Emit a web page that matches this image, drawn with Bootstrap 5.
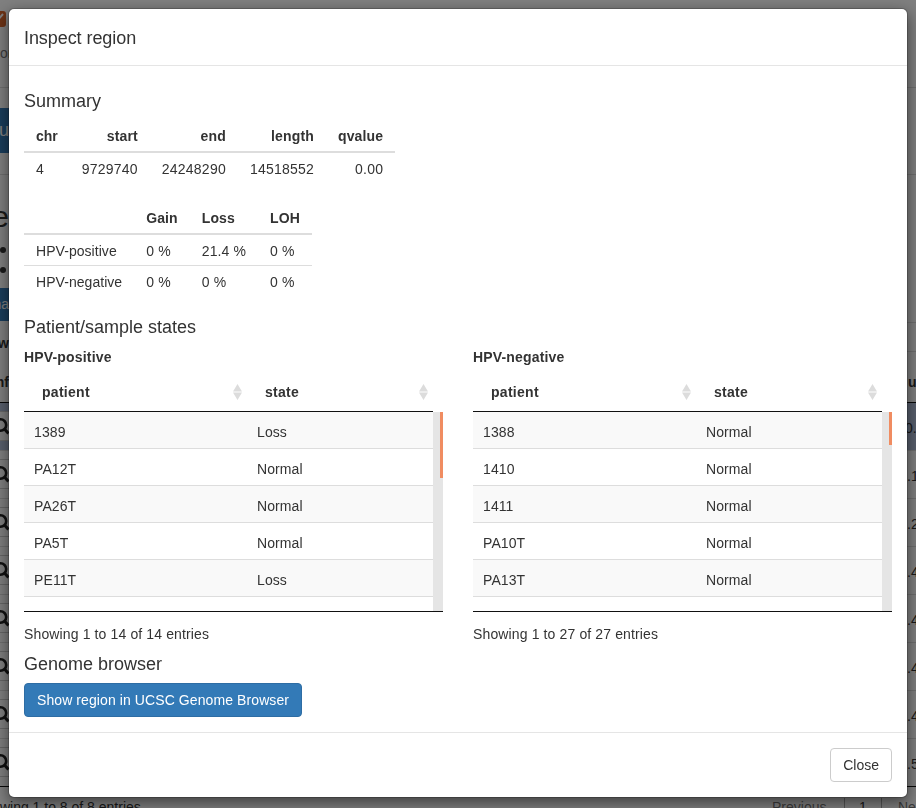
<!DOCTYPE html>
<html lang="en">

<head>
  <meta charset="UTF-8">
  <meta name="viewport" content="width=device-width, initial-scale=1.0">
  <title>Inspect region</title>
  <link rel="stylesheet" href="https://cdn.jsdelivr.net/npm/bootstrap@5.3.0/dist/css/bootstrap.min.css">
  <style>
    html, body {
      height: 100%;
      overflow: hidden;
    }

    body {
      font-family: "Liberation Sans", Arial, sans-serif;
      font-size: 14px;
      line-height: 1.42857;
      color: #333;
      background: #fff;
    }

    /* page behind the modal, only its edges show */
    .bg-page {
      height: 808px;
      overflow: hidden;
    }

    .edge-left {
      width: 9px;
      overflow: hidden;
      display: flex;
      justify-content: flex-end;
      white-space: nowrap;
      flex: none;
    }

    .edge-left svg {
      flex: none;
    }

    .edge-right {
      width: 9px;
      overflow: hidden;
      white-space: nowrap;
      flex: none;
    }

    .bg-top {
      height: 88px;
      padding-top: 11px;
      border-bottom: 1px solid #ddd;
    }

    .bg-check {
      margin-right: 3px;
    }

    .bg-sub {
      margin-top: 17px;
      color: #777;
      justify-content: flex-start;
    }

    .bg-run {
      height: 87px;
      padding-top: 20px;
      border-bottom: 1px solid #ddd;
    }

    .bg-btn {
      background: #337ab7;
      color: #fff;
    }

    .bg-run .bg-btn {
      height: 45px;
      font-size: 18px;
      line-height: 45px;
    }

    .bg-heading {
      height: 33px;
      margin-top: 25px;
      font-size: 30px;
      line-height: 33px;
    }

    .bg-bullets {
      margin-top: 7px;
      height: 40px;
    }

    .bg-dot-row {
      height: 20px;
      align-items: center;
      padding-right: 3px;
    }

    .bg-dot {
      width: 6px;
      height: 6px;
      border-radius: 50%;
      background: #333;
      flex: none;
    }

    .bg-manage {
      margin-top: 8px;
      height: 33px;
      line-height: 33px;
    }

    .bg-rule {
      height: 1px;
      margin-top: 1px;
      margin-left: 500px;
      background: #ddd;
    }

    .bg-rule-second {
      margin-top: 28px;
    }

    .bg-word {
      margin-top: -18px;
      height: 20px;
      font-weight: 700;
    }

    .bg-head {
      margin-top: 19px;
      height: 30px;
      border-bottom: 1px solid #111;
      font-weight: 700;
    }

    .bg-head-right {
      padding-left: 1px;
    }

    .bg-row {
      height: 48px;
      border-bottom: 1px solid #ddd;
    }

    .bg-row.is-selected {
      background: #b0bed9;
    }

    .bg-row.is-last {
      border-bottom-color: #111;
    }

    .bg-search {
      height: 30px;
      margin-top: 8px;
      background: #fff;
      border-top: 1px solid #ccc;
      border-bottom: 1px solid #ccc;
      align-items: center;
    }

    .bg-num {
      line-height: 48px;
      padding-top: 1px;
    }

    .bg-num-first {
      margin-left: -2px;
    }

    .bg-foot {
      height: 21px;
      margin-top: 11px;
    }

    .bg-foot-left {
      margin-left: -25px;
    }

    .bg-pager {
      width: 144px;
      overflow: hidden;
      color: #777;
    }

    .bg-pager-prev {
      width: 72px;
      flex: none;
    }

    .bg-pager-num {
      width: 37px;
      flex: none;
      text-align: center;
      border-left: 1px solid #aaa;
      color: #333;
    }

    .bg-pager-next {
      padding-left: 16px;
      border-left: 1px solid #aaa;
      flex: none;
    }

    /* modal */
    .region-modal {
      --bs-modal-width: 900px;
      --bs-modal-margin: 8px;
      --bs-modal-padding: 15px;
      --bs-modal-header-padding: 17px 15px 13px;
      --bs-modal-footer-gap: 0px;
      --bs-modal-border-radius: 6px;
      --bs-modal-inner-border-radius: 5px;
      --bs-modal-border-color: rgba(0, 0, 0, .2);
      --bs-modal-header-border-color: #e5e5e5;
      --bs-modal-footer-border-color: #e5e5e5;
      --bs-modal-title-line-height: 1.42857;
      overflow: hidden;
    }

    .region-modal .modal-content {
      box-shadow: 0 5px 15px rgba(0, 0, 0, .5);
    }

    .region-title {
      font-size: 18px;
      font-weight: 400;
      letter-spacing: -.07px;
    }

    .section-title {
      font-size: 18px;
      font-weight: 400;
      line-height: 1.1;
      margin: 11px 0 9px;
    }

    .genome-title {
      margin-bottom: 8px;
    }

    .info-table {
      width: auto;
      margin-bottom: 20px;
      color: #333;
      --bs-table-color: #333;
      --bs-table-border-color: #ddd;
    }

    .info-table > :not(caption) > * > * {
      padding: 5px 12px;
      line-height: 20px;
    }

    .info-table > tbody > * > * {
      padding: 6px 12px 4px;
    }

    .info-table thead th {
      border-bottom: 2px solid #ddd;
      letter-spacing: .15px;
    }

    .info-table thead th:first-child {
      letter-spacing: 0;
    }

    .info-table td {
      letter-spacing: .12px;
    }

    .info-table td.text-end {
      letter-spacing: .22px;
    }

    .info-table td.row-label {
      letter-spacing: .05px;
    }

    .info-table tbody tr:last-child td {
      border-bottom: 0;
    }

    .info-table-last {
      margin-bottom: 22px;
    }

    .info-table-last thead th {
      letter-spacing: .1px;
    }

    .state-row {
      --bs-gutter-x: 30px;
    }

    .state-name {
      font-size: 14px;
      font-weight: 700;
      line-height: 20px;
      margin: 1px 0 4px;
      letter-spacing: .17px;
    }

    .dt-table {
      table-layout: fixed;
      width: 409px;
      margin: 0;
      --bs-table-color: #333;
      --bs-table-border-color: #ddd;
      --bs-table-striped-bg: #f9f9f9;
      --bs-table-striped-color: #333;
    }

    .dt-col-patient {
      width: 223px;
    }

    .dt-head > :not(caption) > * > * {
      padding: 11px 5px 9px 18px;
      line-height: 20px;
      border-bottom: 1px solid #111;
      letter-spacing: .28px;
    }

    .dt-rows .dt-table > :not(caption) > * > * {
      padding: 10px 10px 6px;
      line-height: 20px;
      letter-spacing: .1px;
    }

    .dt-scroll {
      height: 200px;
      border-bottom: 1px solid #111;
      width: 419px;
    }

    .dt-rows {
      width: 409px;
      overflow: hidden;
    }

    .dt-track {
      width: 10px;
      background: #e5e5e5;
      flex: none;
    }

    .dt-thumb {
      width: 3px;
      margin-left: auto;
      background: #f08c61;
    }

    .dt-info {
      padding-top: 12px;
      line-height: 20px;
      letter-spacing: .13px;
    }

    .ucsc-btn {
      --bs-btn-padding-x: 12px;
      --bs-btn-padding-y: 6px;
      --bs-btn-font-size: 14px;
      --bs-btn-line-height: 20px;
      --bs-btn-border-radius: 4px;
      --bs-btn-bg: #337ab7;
      --bs-btn-border-color: #2e6da4;
      --bs-btn-color: #fff;
      display: block;
      white-space: nowrap;
      letter-spacing: .09px;
    }

    .close-btn {
      --bs-btn-padding-x: 12px;
      --bs-btn-padding-y: 6px;
      --bs-btn-font-size: 14px;
      --bs-btn-line-height: 20px;
      --bs-btn-border-radius: 4px;
      --bs-btn-bg: #fff;
      --bs-btn-border-color: #ccc;
      --bs-btn-color: #333;
    }
  </style>
</head>

<body>
  <div class="bg-page">
    <div class="bg-top">
      <div class="edge-left">
        <svg class="bg-check" width="16" height="16" viewBox="0 0 16 16" aria-hidden="true">
          <rect width="16" height="16" rx="3" fill="#d9662c"></rect>
          <path d="M3 8l3 3 7-8" fill="none" stroke="#fff" stroke-width="2"></path>
        </svg>
      </div>
      <div class="edge-left bg-sub">or</div>
    </div>
    <div class="bg-run">
      <div class="edge-left bg-btn">Ru</div>
    </div>
    <div class="edge-left bg-heading">e</div>
    <div class="bg-bullets">
      <div class="edge-left bg-dot-row"><span class="bg-dot"></span></div>
      <div class="edge-left bg-dot-row"><span class="bg-dot"></span></div>
    </div>
    <div class="edge-left bg-btn bg-manage">na</div>
    <div class="bg-rule"></div>
    <div class="bg-rule bg-rule-second"></div>
    <div class="edge-left bg-word">w</div>

    <div class="bg-head d-flex justify-content-between align-items-start">
      <div class="edge-left">nf</div>
      <div class="edge-right bg-head-right">u</div>
    </div>

    <div class="bg-row is-selected d-flex justify-content-between">
      <div class="edge-left bg-search">
        <svg width="17" height="17" viewBox="0 0 17 17" aria-hidden="true">
          <circle cx="8.5" cy="7" r="5.7" fill="none" stroke="#222" stroke-width="2.6"></circle>
          <path d="M12.7 11.2L16.5 15.5" stroke="#222" stroke-width="3"></path>
        </svg>
      </div>
      <div class="edge-right bg-num"><span class="bg-num-first d-inline-block">0.</span></div>
    </div>
    <div class="bg-row d-flex justify-content-between">
      <div class="edge-left bg-search">
        <svg width="17" height="17" viewBox="0 0 17 17" aria-hidden="true">
          <circle cx="8.5" cy="7" r="5.7" fill="none" stroke="#222" stroke-width="2.6"></circle>
          <path d="M12.7 11.2L16.5 15.5" stroke="#222" stroke-width="3"></path>
        </svg>
      </div>
      <div class="edge-right bg-num">.1</div>
    </div>
    <div class="bg-row d-flex justify-content-between">
      <div class="edge-left bg-search">
        <svg width="17" height="17" viewBox="0 0 17 17" aria-hidden="true">
          <circle cx="8.5" cy="7" r="5.7" fill="none" stroke="#222" stroke-width="2.6"></circle>
          <path d="M12.7 11.2L16.5 15.5" stroke="#222" stroke-width="3"></path>
        </svg>
      </div>
      <div class="edge-right bg-num">.2</div>
    </div>
    <div class="bg-row d-flex justify-content-between">
      <div class="edge-left bg-search">
        <svg width="17" height="17" viewBox="0 0 17 17" aria-hidden="true">
          <circle cx="8.5" cy="7" r="5.7" fill="none" stroke="#222" stroke-width="2.6"></circle>
          <path d="M12.7 11.2L16.5 15.5" stroke="#222" stroke-width="3"></path>
        </svg>
      </div>
      <div class="edge-right bg-num">.4</div>
    </div>
    <div class="bg-row d-flex justify-content-between">
      <div class="edge-left bg-search">
        <svg width="17" height="17" viewBox="0 0 17 17" aria-hidden="true">
          <circle cx="8.5" cy="7" r="5.7" fill="none" stroke="#222" stroke-width="2.6"></circle>
          <path d="M12.7 11.2L16.5 15.5" stroke="#222" stroke-width="3"></path>
        </svg>
      </div>
      <div class="edge-right bg-num">.4</div>
    </div>
    <div class="bg-row d-flex justify-content-between">
      <div class="edge-left bg-search">
        <svg width="17" height="17" viewBox="0 0 17 17" aria-hidden="true">
          <circle cx="8.5" cy="7" r="5.7" fill="none" stroke="#222" stroke-width="2.6"></circle>
          <path d="M12.7 11.2L16.5 15.5" stroke="#222" stroke-width="3"></path>
        </svg>
      </div>
      <div class="edge-right bg-num">.4</div>
    </div>
    <div class="bg-row d-flex justify-content-between">
      <div class="edge-left bg-search">
        <svg width="17" height="17" viewBox="0 0 17 17" aria-hidden="true">
          <circle cx="8.5" cy="7" r="5.7" fill="none" stroke="#222" stroke-width="2.6"></circle>
          <path d="M12.7 11.2L16.5 15.5" stroke="#222" stroke-width="3"></path>
        </svg>
      </div>
      <div class="edge-right bg-num">.4</div>
    </div>
    <div class="bg-row is-last d-flex justify-content-between">
      <div class="edge-left bg-search">
        <svg width="17" height="17" viewBox="0 0 17 17" aria-hidden="true">
          <circle cx="8.5" cy="7" r="5.7" fill="none" stroke="#222" stroke-width="2.6"></circle>
          <path d="M12.7 11.2L16.5 15.5" stroke="#222" stroke-width="3"></path>
        </svg>
      </div>
      <div class="edge-right bg-num">.5</div>
    </div>

    <div class="bg-foot d-flex justify-content-between">
      <div class="bg-foot-left">Showing 1 to 8 of 8 entries</div>
      <div class="bg-pager d-flex">
        <span class="bg-pager-prev">Previous</span>
        <span class="bg-pager-num">1</span>
        <span class="bg-pager-next">Next</span>
      </div>
    </div>
  </div>

  <div class="modal-backdrop show"></div>

  <div class="modal region-modal d-block" tabindex="-1">
    <div class="modal-dialog">
      <div class="modal-content">
        <div class="modal-header">
          <h4 class="modal-title region-title">Inspect region</h4>
        </div>
        <div class="modal-body">
          <h4 class="section-title">Summary</h4>
          <table class="table info-table">
            <thead>
              <tr>
                <th>chr</th>
                <th class="text-end">start</th>
                <th class="text-end">end</th>
                <th class="text-end">length</th>
                <th class="text-end">qvalue</th>
              </tr>
            </thead>
            <tbody>
              <tr>
                <td>4</td>
                <td class="text-end">9729740</td>
                <td class="text-end">24248290</td>
                <td class="text-end">14518552</td>
                <td class="text-end">0.00</td>
              </tr>
            </tbody>
          </table>

          <table class="table info-table info-table-last">
            <thead>
              <tr>
                <th></th>
                <th>Gain</th>
                <th>Loss</th>
                <th>LOH</th>
              </tr>
            </thead>
            <tbody>
              <tr>
                <td class="row-label">HPV-positive</td>
                <td>0 %</td>
                <td>21.4 %</td>
                <td>0 %</td>
              </tr>
              <tr>
                <td class="row-label">HPV-negative</td>
                <td>0 %</td>
                <td>0 %</td>
                <td>0 %</td>
              </tr>
            </tbody>
          </table>

          <h4 class="section-title">Patient/sample states</h4>
          <div class="row state-row">
            <div class="col-6">
              <h5 class="state-name">HPV-positive</h5>
              <table class="table dt-table dt-head">
                <colgroup><col class="dt-col-patient"><col></colgroup>
                <thead>
                  <tr>
                    <th>
                      <div class="d-flex justify-content-between align-items-center">
                        <span>patient</span>
                        <svg width="9" height="16" viewBox="0 0 9 16" aria-hidden="true"><path d="M4.5 0L9 7.5H0zM4.5 16L0 8.5h9z" fill="#dcdcdc"></path></svg>
                      </div>
                    </th>
                    <th>
                      <div class="d-flex justify-content-between align-items-center">
                        <span>state</span>
                        <svg width="9" height="16" viewBox="0 0 9 16" aria-hidden="true"><path d="M4.5 0L9 7.5H0zM4.5 16L0 8.5h9z" fill="#dcdcdc"></path></svg>
                      </div>
                    </th>
                  </tr>
                </thead>
              </table>
              <div class="dt-scroll d-flex">
                <div class="dt-rows">
                  <table class="table table-striped dt-table">
                    <colgroup><col class="dt-col-patient"><col></colgroup>
                    <tbody>
                      <tr><td>1389</td><td>Loss</td></tr>
                      <tr><td>PA12T</td><td>Normal</td></tr>
                      <tr><td>PA26T</td><td>Normal</td></tr>
                      <tr><td>PA5T</td><td>Normal</td></tr>
                      <tr><td>PE11T</td><td>Loss</td></tr>
                    </tbody>
                  </table>
                </div>
                <div class="dt-track"><div class="dt-thumb" style="height: 66px"></div></div>
              </div>
              <div class="dt-info">Showing 1 to 14 of 14 entries</div>
            </div>
            <div class="col-6">
              <h5 class="state-name">HPV-negative</h5>
              <table class="table dt-table dt-head">
                <colgroup><col class="dt-col-patient"><col></colgroup>
                <thead>
                  <tr>
                    <th>
                      <div class="d-flex justify-content-between align-items-center">
                        <span>patient</span>
                        <svg width="9" height="16" viewBox="0 0 9 16" aria-hidden="true"><path d="M4.5 0L9 7.5H0zM4.5 16L0 8.5h9z" fill="#dcdcdc"></path></svg>
                      </div>
                    </th>
                    <th>
                      <div class="d-flex justify-content-between align-items-center">
                        <span>state</span>
                        <svg width="9" height="16" viewBox="0 0 9 16" aria-hidden="true"><path d="M4.5 0L9 7.5H0zM4.5 16L0 8.5h9z" fill="#dcdcdc"></path></svg>
                      </div>
                    </th>
                  </tr>
                </thead>
              </table>
              <div class="dt-scroll d-flex">
                <div class="dt-rows">
                  <table class="table table-striped dt-table">
                    <colgroup><col class="dt-col-patient"><col></colgroup>
                    <tbody>
                      <tr><td>1388</td><td>Normal</td></tr>
                      <tr><td>1410</td><td>Normal</td></tr>
                      <tr><td>1411</td><td>Normal</td></tr>
                      <tr><td>PA10T</td><td>Normal</td></tr>
                      <tr><td>PA13T</td><td>Normal</td></tr>
                    </tbody>
                  </table>
                </div>
                <div class="dt-track"><div class="dt-thumb" style="height: 33px"></div></div>
              </div>
              <div class="dt-info">Showing 1 to 27 of 27 entries</div>
            </div>
          </div>

          <h4 class="section-title genome-title">Genome browser</h4>
          <button type="button" class="btn btn-primary ucsc-btn">Show region in UCSC Genome Browser</button>
        </div>
        <div class="modal-footer">
          <button type="button" class="btn btn-light close-btn">Close</button>
        </div>
      </div>
    </div>
  </div>

  <script src="https://cdn.jsdelivr.net/npm/bootstrap@5.3.0/dist/js/bootstrap.bundle.min.js"></script>
</body>

</html>
